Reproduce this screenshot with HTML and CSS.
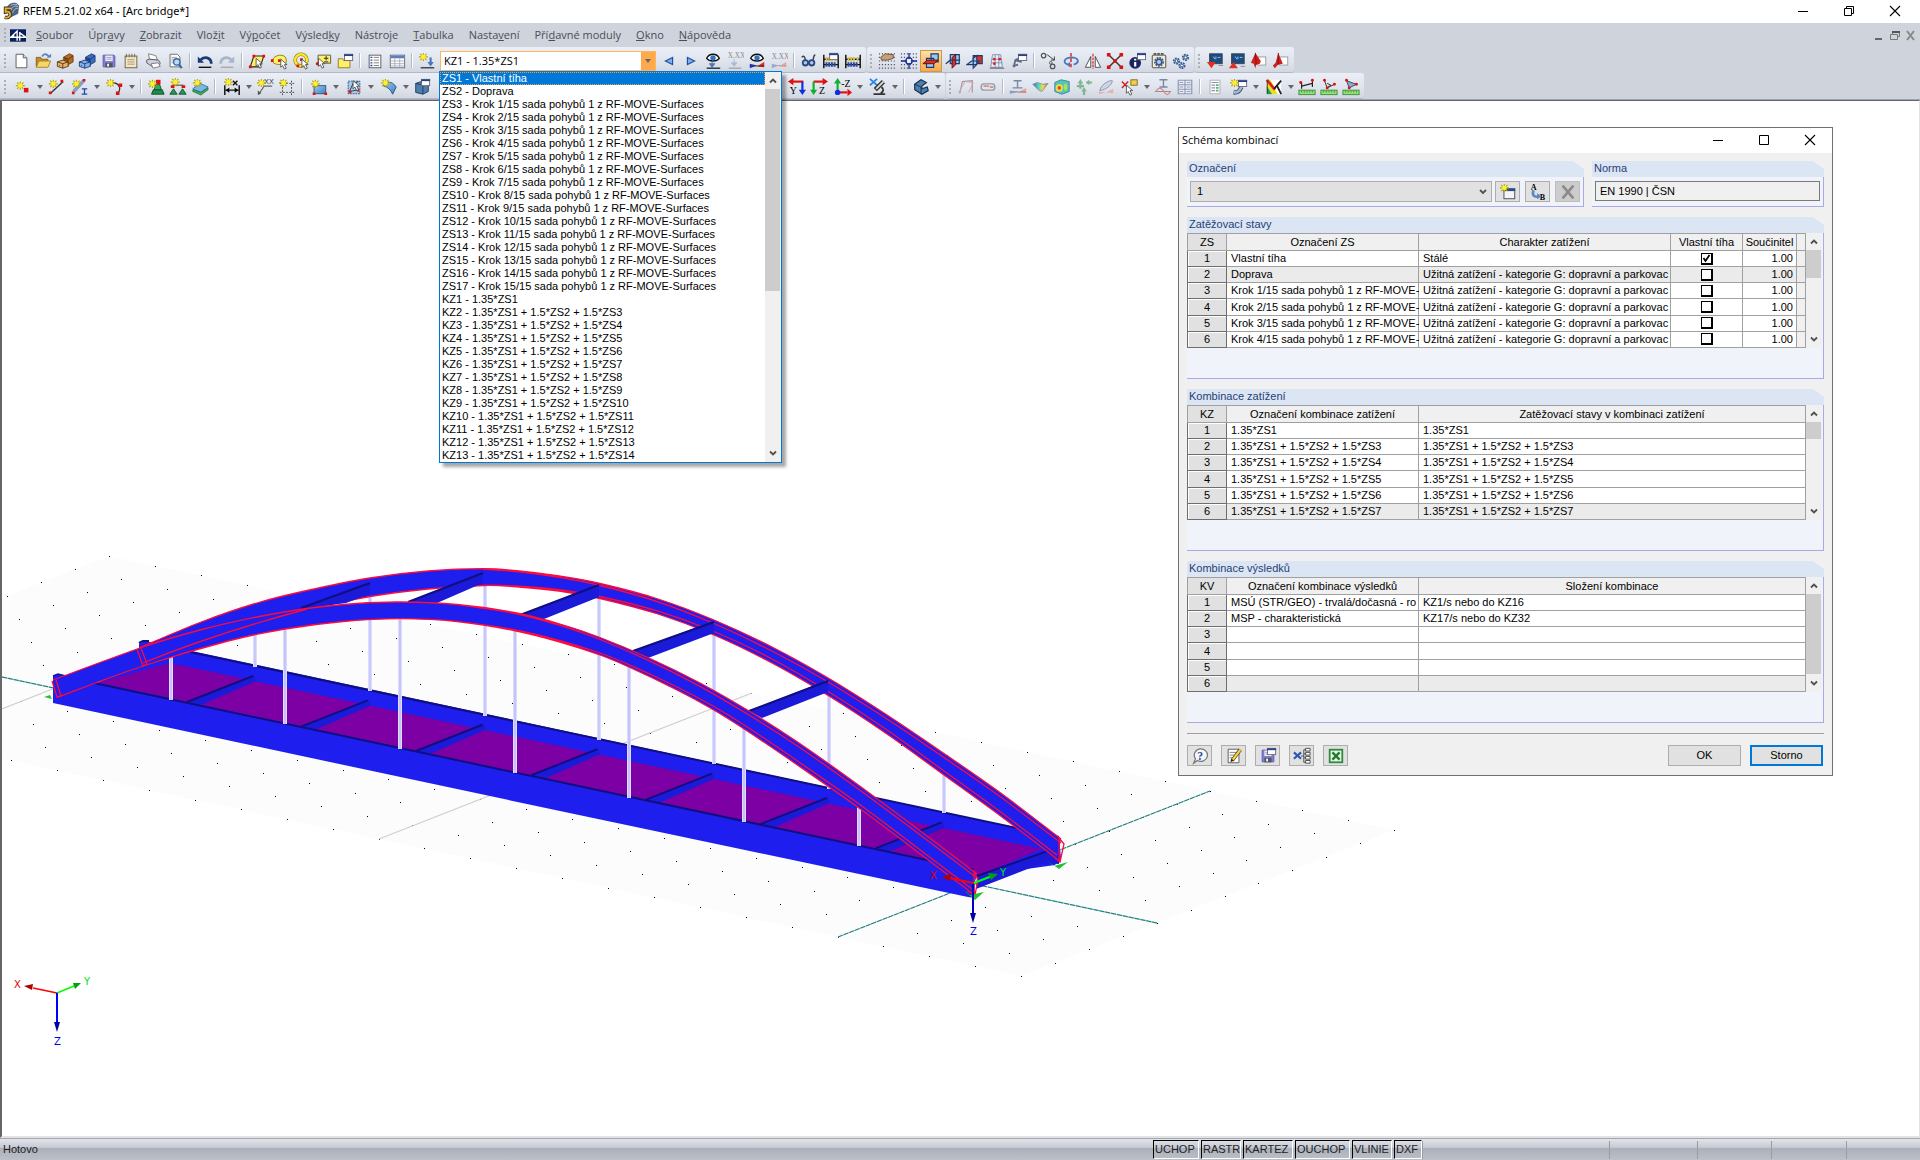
FILE: index.html
```html
<!DOCTYPE html>
<html lang="cs">
<head>
<meta charset="utf-8">
<title>RFEM 5.21.02 x64 - [Arc bridge*]</title>
<link rel="stylesheet" href="styles.css">
</head>
<body>
<svg class="paints" width="0" height="0" aria-hidden="true">
  <defs>
    <linearGradient id="gBlue" x1="0" y1="0" x2="1" y2="1"><stop offset="0" stop-color="#9cc8f0"/><stop offset="1" stop-color="#3f7fc0"/></linearGradient>
    <linearGradient id="gHot" x1="0" y1="0" x2="1" y2="0"><stop offset="0" stop-color="#3a55e0"/><stop offset=".35" stop-color="#4fd0c0"/><stop offset=".65" stop-color="#e8e040"/><stop offset="1" stop-color="#e86050"/></linearGradient>
  </defs>
</svg>
<svg class="sprite" aria-hidden="true">
  <defs>
    <g id="st"><path d="M5 0v9M0 4.500h10M1.500 1l7 7M1.500 8l7-7" stroke="#b9a800" stroke-width="1.300"/><circle cx="5" cy="4.500" r="2.600" fill="#fff02a"/></g>
    <path id="cur" d="M0 0v9l2-2 2 4 2-1-2-4h3z" fill="#fff" stroke="#444" stroke-width=".9"/>
    <g id="win"><rect x=".5" y=".5" width="9" height="7" fill="#fff" stroke="#667"/><path d="M0 1.500h10" stroke="#2a3f8a" stroke-width="2"/></g>
    <g id="grid"><path d="M1 2h18M1 6h18M1 10h18M1 14h18M1 18h18" stroke="#556" stroke-width="1.300" stroke-dasharray="1.300 2" fill="none"/></g>
    <g id="ruler"><rect x="1" y="13.500" width="18" height="5" fill="#8fe07a" stroke="#3f8a3a"/><path d="M4 14v2M7 14v2M10 14v2M13 14v2M16 14v2" stroke="#3f8a3a"/></g>
  </defs>
  <symbol id="i-logo" viewBox="0 0 20 20"><path d="M5 8c1-6 6-8 11-7l3 3-1 9-8 4z" fill="#4b637e"/><path d="M8 7c1-4 5-5 9-4M10 9c1-4 4-5 8-4M12 12c1-4 3-5 6-5" stroke="#b8cbe0" fill="none"/><path d="M10 7H4v4c4-1 5 1 5 3s-2 4-6 3" fill="none" stroke="#333" stroke-width="4"/><path d="M10 7H4v4c4-1 5 1 5 3s-2 4-6 3" fill="none" stroke="#f0b020" stroke-width="2"/></symbol>
  <symbol id="i-mdi" viewBox="0 0 18 14"><rect width="18" height="14" fill="#0b1f5c"/><path d="M0 9h18M1 9l7-7v11M11 3v10M11 4l7 5M4 6v3" stroke="#fff" stroke-width="1.500" fill="none"/></symbol>
  <symbol id="i-new" viewBox="0 0 20 20"><path d="M4.500 2.500h8l4 4v11h-12z" fill="#fff" stroke="#555"/><path d="M12.500 2.500v4h4" fill="#ddd" stroke="#555"/></symbol>
  <symbol id="i-open" viewBox="0 0 20 20"><path d="M2.500 16V6h5l1 2h7v8z" fill="#c98a2a" stroke="#86600f"/><path d="M2.500 17l3-7h13l-3 7z" fill="#f5d76a" stroke="#a88020"/><path d="M9 5c2-4 6-3 8 1" fill="none" stroke="#5b86c0" stroke-width="2"/><path d="M14 6h5V2z" fill="#5b86c0"/></symbol>
  <symbol id="i-cab" viewBox="0 0 20 20"><path d="M8 6l7-4 4 2v7l-5 3" fill="#b86a20" stroke="#4a2c0a" stroke-width=".8"/><path d="M8 6l6 2v8l-6-2z" fill="#8a4f18"/><path d="M1.500 11l6-2 6 2v5l-6 2-6-2z" fill="#e8b068" stroke="#4a2c0a" stroke-width=".9"/><path d="M1.500 11l6 2 6-2M7.500 13v5M4 14.500v1M8 6l6 2 5-4" fill="none" stroke="#4a2c0a" stroke-width=".9"/></symbol>
  <symbol id="i-cabb" viewBox="0 0 20 20"><path d="M8 6l7-4 4 2v7l-5 3" fill="#3b6cc0" stroke="#12306a" stroke-width=".8"/><path d="M8 6l6 2v8l-6-2z" fill="#22488c"/><path d="M1.500 11l6-2 6 2v5l-6 2-6-2z" fill="#86b0ee" stroke="#12306a" stroke-width=".9"/><path d="M1.500 11l6 2 6-2M7.500 13v5M4 14.500v1M8 6l6 2 5-4" fill="none" stroke="#12306a" stroke-width=".9"/></symbol>
  <symbol id="i-save" viewBox="0 0 20 20"><path d="M3.500 3.500h12l1 1v12h-13z" fill="#7f7fd0" stroke="#5a5ab0"/><rect x="6" y="4" width="8" height="6" fill="#f2f2ff"/><path d="M7 6h6M7 8h6" stroke="#99a"/><rect x="6" y="12" width="8" height="5" fill="#556"/><rect x="8" y="13" width="2" height="3" fill="#fff"/></symbol>
  <symbol id="i-note" viewBox="0 0 20 20"><rect x="3.500" y="4.500" width="13" height="13" fill="#f5e6c8" stroke="#6b5a40"/><path d="M5 2v4M8 2v4M11 2v4M14 2v4" stroke="#7b6a50"/><path d="M6 8.500h8M6 11h8M6 13.500h8" stroke="#a59070"/></symbol>
  <symbol id="i-print" viewBox="0 0 20 20"><path d="M5 2l8 2 2 5-9-1z" fill="#fff" stroke="#777"/><path d="M3 9l3-1 10 1 2 3-1 3-8 1-6-4z" fill="#d0d0dc" stroke="#556"/><path d="M8 13l8-1 2 4-8 2z" fill="#fff" stroke="#777"/></symbol>
  <symbol id="i-prev" viewBox="0 0 20 20"><path d="M4.500 2.500h8l3 3v11h-11z" fill="#fff" stroke="#666"/><path d="M6 6h6M6 8h7M6 10h5M6 12h5" stroke="#99a"/><circle cx="12" cy="11" r="3.500" fill="#b8dcf5" stroke="#3868a0" stroke-width="1.400"/><path d="M14.500 14l3 4" stroke="#3868a0" stroke-width="2.400"/></symbol>
  <symbol id="i-undo" viewBox="0 0 20 20"><path d="M5 9c4-5 12-3 12 4" fill="none" stroke="#1d3a78" stroke-width="3"/><path d="M2 5v7h7z" fill="#1d3a78"/><path d="M3 17h14" stroke="#111" stroke-width="1.500"/></symbol>
  <symbol id="i-redo" viewBox="0 0 20 20"><path d="M15 9C11 4 3 6 3 13" fill="none" stroke="#a9b5cc" stroke-width="3"/><path d="M18 5v7h-7z" fill="#a9b5cc"/><path d="M3 17h14" stroke="#aaa" stroke-width="1.500"/></symbol>
  <symbol id="i-para" viewBox="0 0 20 20"><path d="M2.500 16.500l4-12h11l-4 12z" fill="#ffef6a" stroke="#222" stroke-width="1.200"/><path d="M1 15h3v3H1zM5 3h3v3H5zM16 3h3v3h-3z" fill="#e01010"/><use href="#cur" x="9" y="7"/></symbol>
  <symbol id="i-ell" viewBox="0 0 20 20"><path d="M3 9c1-6 14-8 15-1s-4 6-7 6-9-1-8-5z" fill="#fff06a" stroke="#8a7a00"/><path d="M1 8h3v3H1zM9 8h3v3H9z" fill="#e01010"/><use href="#cur" x="12" y="8"/></symbol>
  <symbol id="i-ring" viewBox="0 0 20 20"><circle cx="10" cy="9" r="6.500" fill="none" stroke="#8a7a00" stroke-width="4"/><circle cx="10" cy="9" r="6.500" fill="none" stroke="#ffe630" stroke-width="2.600"/><path d="M9 7h3v3H9zM5 14h3v3H5z" fill="#e01010"/><use href="#cur" x="11" y="8"/></symbol>
  <symbol id="i-selpm" viewBox="0 0 20 20"><path d="M4.500 3.500h14v9h-14z" fill="#fff06a" stroke="#555"/><path d="M11 7h5M13.500 4.500v5M11 11h5" stroke="#222"/><circle cx="4" cy="13" r="2" fill="#e01010"/><use href="#cur" x="5" y="7"/></symbol>
  <symbol id="i-foldw" viewBox="0 0 20 20"><path d="M2.500 7.500h5l1 2h7v8h-13z" fill="#fff06a" stroke="#8a7a20"/><use href="#win" x="9" y="2"/></symbol>
  <symbol id="i-tab1" viewBox="0 0 20 20"><rect x="3.500" y="3.500" width="13" height="14" fill="#fff" stroke="#555"/><path d="M5 6h2M5 9h2M5 12h2M5 15h2" stroke="#2244aa" stroke-width="1.500"/><path d="M8.500 6h6M8.500 9h6M8.500 12h6M8.500 15h6" stroke="#777"/></symbol>
  <symbol id="i-tab2" viewBox="0 0 20 20"><rect x="2.500" y="3.500" width="16" height="14" fill="#fff" stroke="#667"/><path d="M3 5.500h15" stroke="#5b7fc0" stroke-width="3"/><path d="M3 10h15M3 13h15M3 15.500h15M7.500 7v10M13 7v10" stroke="#aab"/></symbol>
  <symbol id="i-load" viewBox="0 0 20 20"><use href="#st" x="1" y="1"/><path d="M14 6v8" stroke="#4a78c0" stroke-width="2.400"/><path d="M10.500 11h7L14 16z" fill="#4a78c0"/><path d="M3 17.500h15" stroke="#444" stroke-width="1.600"/></symbol>
  <symbol id="i-left" viewBox="0 0 20 20"><path d="M6 10l8-4v8z" fill="#7fb0f0" stroke="#2050a0" stroke-width="1.300"/></symbol>
  <symbol id="i-right" viewBox="0 0 20 20"><path d="M14 10L6 6v8z" fill="#7fb0f0" stroke="#2050a0" stroke-width="1.300"/></symbol>
  <symbol id="i-eyel" viewBox="0 0 20 20"><path d="M3 7c3-6 11-6 14 0-3 4-11 4-14 0z" fill="#fff" stroke="#111" stroke-width="1.500"/><circle cx="10" cy="6.500" r="3" fill="#3a70c0"/><path d="M9 10v4M6 13h6l-3 4z" stroke="#4a78c0" fill="#4a78c0"/><path d="M3 18h15" stroke="#333" stroke-width="1.600"/></symbol>
  <symbol id="i-xxl" viewBox="0 0 20 20"><text x="2" y="7" font-size="8" fill="#888" font-family="Liberation Serif">X.XX</text><path d="M9 8v5M6 12h6l-3 4z" stroke="#a9bbd8" fill="#a9bbd8"/><path d="M3 18h14" stroke="#aaa" stroke-width="1.600"/></symbol>
  <symbol id="i-eyer" viewBox="0 0 20 20"><path d="M3 7c3-6 11-6 14 0-3 4-11 4-14 0z" fill="#fff" stroke="#111" stroke-width="1.500"/><circle cx="10" cy="6.500" r="3" fill="#3a70c0"/><path d="M2 13v5l8-3z" fill="#2030d0"/><path d="M18 11v6l-8-1z" fill="#e02020"/><path d="M2 15.500h16" stroke="#333"/></symbol>
  <symbol id="i-xxr" viewBox="0 0 20 20"><text x="2" y="8" font-size="8" fill="#888" font-family="Liberation Serif">X.XX</text><path d="M2 13v5l8-3z" fill="#9aa4e8"/><path d="M18 11v6l-8-1z" fill="#eea0a0"/><path d="M2 15h16" stroke="#aaa"/></symbol>
  <symbol id="i-glass" viewBox="0 0 20 20"><path d="M2 6c2-3 4 0 4 4M17 3c-3 1-1 4-3 7" fill="none" stroke="#345" stroke-width="1.600"/><circle cx="6" cy="12" r="3" fill="#a8c8ec" stroke="#2c4a80" stroke-width="2"/><circle cx="13" cy="12" r="3" fill="#a8c8ec" stroke="#2c4a80" stroke-width="2"/></symbol>
  <symbol id="i-aba" viewBox="0 0 20 20"><path d="M2 3v15M18 3v15M2 8h16M2 14h16" stroke="#111" stroke-width="1.600"/><path d="M5 5.500v5M8 5.500v5M11 5.500v5M15 5.500v5" stroke="#d8c050" stroke-width="2.200"/><path d="M5 11.500v5M8 11.500v5M11 11.500v5M14 11.500v5" stroke="#2a48a0" stroke-width="2.200"/></symbol>
  <symbol id="i-abaw" viewBox="0 0 20 20"><use href="#i-aba" width="20" height="20"/><use href="#win" x="8" y="1"/></symbol>
  <symbol id="i-hand" viewBox="0 0 20 20"><use href="#grid"/><path d="M3 6l5-4 9 1v4l-6 2-7 0z" fill="#c8a07a" stroke="#6b4a2a"/></symbol>
  <symbol id="i-snap" viewBox="0 0 20 20"><use href="#grid"/><circle cx="10" cy="10" r="3.500" fill="#fff" stroke="#1a2f9a" stroke-width="1.500"/><path d="M10 1v7M10 12v7M1 10h7M12 10h7" stroke="#1a2f9a" stroke-width="1.500"/></symbol>
  <symbol id="i-pl1" viewBox="0 0 20 20"><path d="M10 2h8v9h-8zM5 7h8v10H5z" fill="#9fc8ee" stroke="#1d3a70" stroke-width="1.300"/><path d="M1 13l5-4h12l-5 4z" fill="#e03020" stroke="#501010"/></symbol>
  <symbol id="i-pl2" viewBox="0 0 20 20"><path d="M7 3h10v10H7z" fill="#9fc8ee" stroke="#1d3a70" stroke-width="1.300"/><path d="M9 6l4-3v11l-4 4z" fill="#e03020" stroke="#501010"/><path d="M2 13l5-4h11" fill="none" stroke="#1d3a70" stroke-width="1.500"/></symbol>
  <symbol id="i-pl3" viewBox="0 0 20 20"><path d="M8 4h10v9H8z" fill="#e83020" stroke="#1d3a70" stroke-width="1.300"/><path d="M1 14l5-4h9l-4 4zM8 7l4-3v10l-4 4z" fill="#9fc8ee" stroke="#1d3a70" stroke-width="1.300"/></symbol>
  <symbol id="i-bld" viewBox="0 0 20 20"><path d="M5 3h9l2 14H3z" fill="#e8eef8" stroke="#8090b0"/><path d="M4 8h11M4 12h12M8 3v14M12 3v14" stroke="#8090b0"/><circle cx="7" cy="8" r="1.500" fill="#e02020"/><circle cx="13" cy="8" r="1.500" fill="#e02020"/><circle cx="7" cy="13" r="1.500" fill="#e02020"/><path d="M2 18h16" stroke="#555"/></symbol>
  <symbol id="i-wr" viewBox="0 0 20 20"><path d="M4 17l2-8 6-3M5 9l8 2M3 16l6-2" fill="none" stroke="#5a6a88" stroke-width="2"/><use href="#win" x="9" y="2"/></symbol>
  <symbol id="i-move" viewBox="0 0 20 20"><circle cx="4" cy="4" r="2.500" fill="none" stroke="#555" stroke-width="1.400"/><circle cx="14" cy="16" r="2.500" fill="none" stroke="#555" stroke-width="1.400"/><circle cx="12" cy="12" r="1.500" fill="none" stroke="#555"/><path d="M8 3l8 6m0-4v4h-4" fill="none" stroke="#333"/></symbol>
  <symbol id="i-rot" viewBox="0 0 20 20"><path d="M7 14c-6-1-6-7 3-8 9 0 10 6 3 8" fill="none" stroke="#4a78c0" stroke-width="2"/><path d="M9 11v6l-4-3z" fill="#4a78c0"/><path d="M10 1v18" stroke="#e02020" stroke-width="1.600" stroke-dasharray="4 2"/></symbol>
  <symbol id="i-mir" viewBox="0 0 20 20"><path d="M7.500 5v12h-6zM12.500 5v12h6z" fill="#fff" stroke="#444"/><path d="M10 2v17" stroke="#e02020" stroke-width="1.300" stroke-dasharray="3 1"/></symbol>
  <symbol id="i-x" viewBox="0 0 20 20"><path d="M3 3l14 14M17 3L3 17" stroke="#333" stroke-width="1.600"/><path d="M1 1h4v4H1zM15 1h4v4h-4zM1 15h4v4H1zM15 15h4v4h-4zM8 8h4v4H8z" fill="#e01010"/></symbol>
  <symbol id="i-info" viewBox="0 0 20 20"><circle cx="8" cy="12" r="6.500" fill="#1a2460"/><path d="M8 11v5M8 7.500v2" stroke="#fff" stroke-width="2.400" fill="none"/><use href="#win" x="10" y="1"/></symbol>
  <symbol id="i-book" viewBox="0 0 20 20"><rect x="2.500" y="3.500" width="15" height="14" rx="1" fill="#f2ead8" stroke="#4a4030"/><path d="M4 2h12" stroke="#555" stroke-width="2" stroke-dasharray="3 1"/><circle cx="10" cy="11" r="4.500" fill="none" stroke="#345890" stroke-width="2" stroke-dasharray="2 1"/><circle cx="10" cy="11" r="3" fill="#b8cce8" stroke="#345890" stroke-width="1.500"/></symbol>
  <symbol id="i-gear" viewBox="0 0 20 20"><g fill="#c8d8f0" stroke="#345890" stroke-width="2" stroke-dasharray="2 1"><circle cx="5" cy="10" r="3"/><circle cx="15" cy="6" r="3"/><circle cx="11" cy="15" r="3"/></g><g fill="#fff" stroke="#345890"><circle cx="5" cy="10" r="1.500"/><circle cx="15" cy="6" r="1.500"/><circle cx="11" cy="15" r="1.500"/></g></symbol>
  <symbol id="i-mon1" viewBox="0 0 20 20"><rect x="4" y="2" width="14" height="11" fill="#1d4a80" stroke="#345"/><path d="M8 5l2 3M11 5v3M13 6h3" stroke="#9fd0ff"/><path d="M1 11h10l-5 7z" fill="#e03020"/><path d="M14 15h5" stroke="#888"/></symbol>
  <symbol id="i-mon2" viewBox="0 0 20 20"><rect x="4" y="2" width="14" height="11" fill="#1d4a80" stroke="#345"/><path d="M8 5l2 3M11 5v3M13 6h3" stroke="#9fd0ff"/><path d="M1 18h10l-5-7z" fill="#e03020"/><path d="M14 16h5" stroke="#888"/></symbol>
  <symbol id="i-red1" viewBox="0 0 20 20"><rect x="8.500" y="5.500" width="9" height="9" fill="#fff" stroke="#999"/><path d="M6 1l6 9-1 3-4 1-1 4-2-5-3-1z" fill="#cc2020"/><path d="M6 1l1 13" stroke="#801010"/></symbol>
  <symbol id="i-red2" viewBox="0 0 20 20"><rect x="8.500" y="5.500" width="9" height="9" fill="#fff" stroke="#999"/><path d="M7 1l5 12-5 1-4 4-2-3 3-3z" fill="#cc2020"/><path d="M7 1l0 13" stroke="#801010"/></symbol>

  <symbol id="i-node" viewBox="0 0 20 20"><use href="#st" x="2" y="4"/><rect x="11" y="11" width="5" height="5" fill="#e01010"/></symbol>
  <symbol id="i-line" viewBox="0 0 20 20"><path d="M4 17L18 4" stroke="#333" stroke-width="1.500"/><path d="M2 15h3v3H2zM15 2h3v3h-3z" fill="#e01010"/><use href="#st" x="2" y="2"/></symbol>
  <symbol id="i-memb" viewBox="0 0 20 20"><path d="M3 15L14 3" stroke="#7fa0d0" stroke-width="4"/><path d="M1 15h3v3H1zM13 1h3v3h-3z" fill="#e01010"/><path d="M12 12h6M12 18h6M15 12v6" stroke="#2244aa" stroke-width="1.400"/><use href="#st" x="1" y="2"/></symbol>
  <symbol id="i-arc" viewBox="0 0 20 20"><path d="M6 5c8 0 12 6 7 12" fill="none" stroke="#333" stroke-width="1.400"/><path d="M11 15h4v4h-4zM14 6h4v4h-4z" fill="#e01010"/><use href="#st" x="0" y="1"/></symbol>
  <symbol id="i-sup1" viewBox="0 0 20 20"><path d="M5 18l2-5h10l2 5z" fill="#1f8a4a" stroke="#0d5028"/><path d="M8 13l2-6h4l2 6z" fill="#35a860" stroke="#0d5028"/><rect x="10" y="2" width="5" height="5" fill="#e01010"/><use href="#st" x="1" y="2"/></symbol>
  <symbol id="i-sup2" viewBox="0 0 20 20"><path d="M4 8h12" stroke="#555" stroke-width="1.300"/><path d="M1 18l4-6 4 6zM11 18l4-6 4 6z" fill="#2a9a50" stroke="#0d5028"/><path d="M2 8h4v3H2zM14 8h4v3h-4z" fill="#e01010"/><use href="#st" x="2" y="0"/></symbol>
  <symbol id="i-sup3" viewBox="0 0 20 20"><path d="M2 12l8-6 9 4-8 6z" fill="#7ab8e8" stroke="#3a70a0"/><path d="M2 13v2l9 4 8-6v-2l-8 5z" fill="#35b058" stroke="#0d5028" stroke-width=".6"/><use href="#st" x="2" y="1"/></symbol>
  <symbol id="i-dim" viewBox="0 0 20 20"><path d="M2 8v11M18 8v11M3 13.500h14" stroke="#111" stroke-width="1.600"/><path d="M3 13.500l4-3v6zM17 13.500l-4-3v6z"/><path d="M11 3l5 5M16 3l-5 5" stroke="#111" stroke-width="1.500"/><use href="#st" x="1" y="0"/></symbol>
  <symbol id="i-xx" viewBox="0 0 20 20"><path d="M3 18L9 9h9" fill="none" stroke="#666" stroke-width="1.300"/><path d="M2 19v-5l4 3z" fill="#555"/><text x="9" y="7" font-size="8" fill="#333" font-family="Liberation Sans">XX</text><use href="#st" x="1" y="1"/></symbol>
  <symbol id="i-area" viewBox="0 0 20 20"><path d="M5 3v16M15 3v16M2 6h16M2 16h16" stroke="#444" stroke-dasharray="2 1.500"/><use href="#st" x="1" y="1"/></symbol>
  <symbol id="i-surf" viewBox="0 0 20 20"><rect x="4.500" y="8.500" width="13" height="9" fill="url(#gBlue)" stroke="#2a5080"/><path d="M3 16h3v3H3zM16 16h3v3h-3z" fill="#e01010"/><use href="#st" x="1" y="2"/></symbol>
  <symbol id="i-mesh" viewBox="0 0 20 20"><path d="M3.500 3.500h13v14h-13z" fill="#a8c8e8" stroke="#2a5080" stroke-dasharray="2 1"/><path d="M5 15l4-9 6 7zM9 6l6-2" fill="none" stroke="#234"/><path d="M4 14h3v3H4zM13 12h3v3h-3z" fill="#e01010"/><use href="#cur" x="9" y="3"/></symbol>
  <symbol id="i-shell" viewBox="0 0 20 20"><path d="M4 6c6-3 11-1 14 4l-4 8c-2-5-5-8-10-9z" fill="url(#gBlue)" stroke="#2a5080"/><use href="#st" x="1" y="1"/></symbol>
  <symbol id="i-solid" viewBox="0 0 20 20"><path d="M3 6l9-3 5 3v9l-6 3-8-2z" fill="#4d7fae" stroke="#1d3a60"/><path d="M3 6l8 2v10M11 8l6-2" fill="none" stroke="#1d3a60"/><use href="#win" x="9" y="1"/></symbol>
  <symbol id="i-ax" viewBox="0 0 20 20"><path d="M5 4h12" stroke="#e01010" stroke-width="2.400"/><path d="M0 4l6-4v8z" fill="#e01010"/><path d="M16 4v11" stroke="#1030e0" stroke-width="2.400"/><path d="M16 19l-4-6h8z" fill="#1030e0"/><text x="2" y="18" font-size="11" font-family="Liberation Serif">Y</text></symbol>
  <symbol id="i-az" viewBox="0 0 20 20"><path d="M4 4h11" stroke="#e01010" stroke-width="2.400"/><path d="M20 4l-6-4v8z" fill="#e01010"/><path d="M4 4v11" stroke="#10b030" stroke-width="2.400"/><path d="M4 19l-4-6h8z" fill="#10b030"/><text x="10" y="18" font-size="11" font-family="Liberation Serif">Z</text></symbol>
  <symbol id="i-amz" viewBox="0 0 20 20"><path d="M4 5v11" stroke="#10b030" stroke-width="2.400"/><path d="M4 0L0 6h8z" fill="#10b030"/><path d="M4 16h11" stroke="#e01010" stroke-width="2.400"/><path d="M20 16l-5-4v8z" fill="#e01010"/><circle cx="4" cy="16" r="3" fill="#1030e0"/><text x="8" y="10" font-size="11" font-family="Liberation Serif">-Z</text></symbol>
  <symbol id="i-micro" viewBox="0 0 20 20"><path d="M1 1l8 7M9 1L1 8" stroke="#2a88e0" stroke-width="2"/><path d="M16 4L7 13" stroke="#333" stroke-width="5"/><path d="M16 4L8 12" stroke="#ddd" stroke-width="2"/><path d="M5 18h13M14 10c3 3 2 5-1 7" fill="none" stroke="#333" stroke-width="2"/></symbol>
  <symbol id="i-iso" viewBox="0 0 20 20"><path d="M3 7l7-5 6 3-5 4v3l6-2 1 4-7 4-8-5z" fill="#4d7fae" stroke="#16304e" stroke-width="1.300"/><path d="M3 7l7 3v8" fill="none" stroke="#16304e"/></symbol>
  <symbol id="i-def" viewBox="0 0 20 20"><path d="M3 17L6 4l11-1v13" fill="none" stroke="#9a9aa4" stroke-width="1.300"/><path d="M2 16l7-12 9 1-5 11" fill="none" stroke="#e0a0a0"/></symbol>
  <symbol id="i-pill" viewBox="0 0 20 20"><rect x="2.500" y="6.500" width="15" height="7" rx="3" fill="#e4e4ea" stroke="#9a9aa4" stroke-width="1.500"/><path d="M5 9h6M12 10h4" stroke="#c89898" stroke-width="2"/></symbol>
  <symbol id="i-ibm" viewBox="0 0 20 20"><path d="M5 3h9M9.500 3v8M4 11h11" stroke="#7a88a8" stroke-width="1.600" fill="none"/><path d="M1 18v-4l9 1z" fill="#a0a8e8"/><path d="M19 11v6l-9-1z" fill="#eea0a0"/><path d="M1 15.500h18" stroke="#888"/></symbol>
  <symbol id="i-hot" viewBox="0 0 20 20"><path d="M2 7l5-2 6 2 6-1-7 9-4-2z" fill="url(#gHot)" stroke="#8890b0"/></symbol>
  <symbol id="i-cube" viewBox="0 0 20 20"><path d="M2 5l7-3 9 2v11l-8 3-8-3z" fill="#50c8b8" stroke="#4080a0"/><circle cx="7" cy="11" r="4" fill="#f0e040"/><circle cx="7" cy="11" r="2" fill="#e84030"/><ellipse cx="14" cy="10" rx="2" ry="4" fill="#b0e050"/></symbol>
  <symbol id="i-grn" viewBox="0 0 20 20"><path d="M6 12V5M2 9h8M13 5h6M10 19v-6" stroke="#7fb890" stroke-width="2.400"/><path d="M6 1l3 5H3zM10 10l3 5H7zM12 5l4-3v6z" fill="#7fb890"/></symbol>
  <symbol id="i-wing" viewBox="0 0 20 20"><path d="M3 14c2-8 12-12 14-11 0 4-6 10-14 11z" fill="#cdd5e4" stroke="#8a94ac"/><path d="M2 18v-3l8 1zM18 12v5l-8-1z" fill="#e8b0b0"/></symbol>
  <symbol id="i-clr" viewBox="0 0 20 20"><path d="M1 4l7 7M8 4l-7 7" stroke="#d02020" stroke-width="1.600"/><rect x="11" y="2" width="7" height="6" fill="#f0d050" stroke="#806a10"/><use href="#cur" x="6" y="8"/></symbol>
  <symbol id="i-sin" viewBox="0 0 20 20"><path d="M6 2h9M10.500 2v8M6 10h9" stroke="#7a88a8" stroke-width="1.600" fill="none"/><path d="M1 15h18" stroke="#888"/><path d="M2 15c3-5 6-5 9 0s5 4 7 0" fill="none" stroke="#e08080" stroke-width="1.300"/></symbol>
  <symbol id="i-tabs" viewBox="0 0 20 20"><path d="M2.500 2.500h15v15h-15zM10 3v14M3 7.500h14M3 12.500h14" fill="#e8ebf4" stroke="#9098b4" stroke-width="1.300"/><path d="M4 5h4M12 5h4M4 10h4M12 10h4M4 15h4M12 15h4" stroke="#9098b4"/></symbol>
  <symbol id="i-rep" viewBox="0 0 20 20"><path d="M4.500 2.500h11v15h-11z" fill="#fff" stroke="#aaa"/><path d="M6 5h8M6 8h4M6 11h4M6 14h4" stroke="#8a94b8" stroke-width="1.300"/><path d="M11 8h3M11 11h3M11 14h3" stroke="#60b080" stroke-width="2"/></symbol>
  <symbol id="i-pipe" viewBox="0 0 20 20"><path d="M4 16c8 1 7-6 10-7" fill="none" stroke="#456" stroke-width="5"/><path d="M4 16c8 1 7-6 10-7" fill="none" stroke="#a0b8d4" stroke-width="3"/><use href="#win" x="9" y="2"/><use href="#st" x="0" y="1"/></symbol>
  <symbol id="i-col" viewBox="0 0 20 20"><path d="M2 2h16v16H2z" fill="#fff"/><path d="M2 2h4l8 16H8L2 9z" fill="#e8e020"/><path d="M2 9l6 9H2z" fill="#20a040"/><path d="M2 2l9 11" stroke="#e02020" stroke-width="3"/><path d="M18 3l-8 9M13 8l5 10" stroke="#222" stroke-width="2"/><path d="M2.500 2.500v15" stroke="#333"/></symbol>
  <symbol id="i-m1" viewBox="0 0 20 20"><use href="#ruler"/><path d="M4 9l12-3M4 5v7M16 3v7" stroke="#222" stroke-width="1.300"/><circle cx="3" cy="5" r="1.600" fill="#e01010"/><circle cx="16" cy="2.500" r="1.600" fill="#e01010"/></symbol>
  <symbol id="i-m2" viewBox="0 0 20 20"><use href="#ruler"/><path d="M5 3l3 8 8-4M8 6l4 2-3 2" fill="none" stroke="#222"/><circle cx="5" cy="2.500" r="1.600" fill="#e01010"/><circle cx="16" cy="7" r="1.600" fill="#e01010"/><circle cx="8" cy="11" r="1.600" fill="#e01010"/></symbol>
  <symbol id="i-m3" viewBox="0 0 20 20"><use href="#ruler"/><path d="M5 3l3 8 8-4z" fill="#8aa8d8" stroke="#345"/><circle cx="5" cy="2.500" r="1.600" fill="#e01010"/><circle cx="16" cy="7" r="1.600" fill="#e01010"/><circle cx="8" cy="11" r="1.600" fill="#e01010"/></symbol>

  <symbol id="i-dnew" viewBox="0 0 20 20"><rect x="5.500" y="6.500" width="12" height="11" fill="#f4f4f4" stroke="#445"/><path d="M5 7.500h13" stroke="#2a4a90" stroke-width="3"/><use href="#st" x="1" y="1"/></symbol>
  <symbol id="i-dren" viewBox="0 0 20 20"><text x="2" y="8" font-size="9" font-weight="700" font-family="Liberation Serif">A</text><text x="12" y="19" font-size="9" font-weight="700" font-family="Liberation Serif">B</text><path d="M5 8c-2 6 1 8 5 7" fill="none" stroke="#5a88c8" stroke-width="3"/><path d="M9 11l5 4-5 3z" fill="#5a88c8"/></symbol>
  <symbol id="i-ddel" viewBox="0 0 20 20"><path d="M4 3l12 14M16 3L4 17" stroke="#8c8c8c" stroke-width="3"/></symbol>
  <symbol id="i-help" viewBox="0 0 20 20"><path d="M10 2a7.500 7 0 1 1-3 13l-4 3 2-5a7 7 0 0 1 5-11z" fill="#f4f6fa" stroke="#777" stroke-width="1.400"/><text x="7" y="14" font-size="13" font-weight="700" fill="#2a4a90" font-family="Liberation Serif">?</text></symbol>
  <symbol id="i-edit" viewBox="0 0 20 20"><path d="M3.500 2.500h12v15h-12z" fill="#fff" stroke="#555"/><path d="M5 6h8M5 9h6M5 12h4" stroke="#778"/><path d="M17 3l-9 12" stroke="#333" stroke-width="4"/><path d="M17 3l-9 12" stroke="#f8d030" stroke-width="2.600"/><path d="M6 17l1-4 3 2z" fill="#222"/></symbol>
  <symbol id="i-savew" viewBox="0 0 20 20"><use href="#i-save" width="20" height="20"/><use href="#win" x="9" y="1"/></symbol>
  <symbol id="i-tree" viewBox="0 0 20 20"><path d="M1 6l8 7M9 6l-8 7" stroke="#2a58b0" stroke-width="2.400"/><path d="M9 10h3M12 3v14h2M12 3h2M12 7.500h2M12 12h2" fill="none" stroke="#444"/><path d="M14 1.500h5v3h-5zM14 6h5v3h-5zM14 10.500h5v3h-5zM14 15h5v3h-5z" fill="#fff" stroke="#444"/></symbol>
  <symbol id="i-xls" viewBox="0 0 20 20"><path d="M2 2h16v16H2z" fill="#2f8a3f"/><path d="M4 4h12v12H4z" fill="#e8f5e8"/><path d="M6 6l8 8M14 6l-8 8" stroke="#1f7a30" stroke-width="2.600"/></symbol>
  <symbol id="i-up" viewBox="0 0 16 16"><path d="M5 10l3-3 3 3" fill="none" stroke="#505050" stroke-width="1.800"/></symbol>
  <symbol id="i-down" viewBox="0 0 16 16"><path d="M5 6l3 3 3-3" fill="none" stroke="#505050" stroke-width="1.800"/></symbol>
  <symbol id="i-min" viewBox="0 0 12 12"><path d="M1 6.500h10" stroke="#000"/></symbol>
  <symbol id="i-max" viewBox="0 0 12 12"><path d="M1.500 1.500h9v9h-9z" fill="none" stroke="#000"/></symbol>
  <symbol id="i-rest" viewBox="0 0 12 12"><path d="M1.500 3.500h7v7h-7zM3.500 3.500v-2h7v7h-2" fill="none" stroke="#000"/></symbol>
  <symbol id="i-close" viewBox="0 0 12 12"><path d="M1 1l10 10M11 1L1 11" stroke="#000" stroke-width="1.100"/></symbol>
  <symbol id="i-arrow" viewBox="0 0 8 8"><path d="M1 2h6L4 6z" fill="#666"/></symbol>
</svg>

<div class="app">
  <header class="titlebar">
    <svg class="app-logo"><use href="#i-logo"/></svg>
    <h1 class="app-title">RFEM 5.21.02 x64 - [Arc bridge*]</h1>
    <div class="win-buttons">
      <button><svg><use href="#i-min"/></svg></button>
      <button><svg><use href="#i-rest"/></svg></button>
      <button><svg><use href="#i-close"/></svg></button>
    </div>
  </header>

  <nav class="menubar">
    <span class="grip"></span>
    <svg class="mdi-icon"><use href="#i-mdi"/></svg>
    <ul class="menu">
      <li><a href="#"><u>S</u>oubor</a></li>
      <li><a href="#">Úpr<u>a</u>vy</a></li>
      <li><a href="#"><u>Z</u>obrazit</a></li>
      <li><a href="#">Vlož<u>i</u>t</a></li>
      <li><a href="#">Vý<u>p</u>očet</a></li>
      <li><a href="#">Výsled<u>k</u>y</a></li>
      <li><a href="#">Nástroje</a></li>
      <li><a href="#"><u>T</u>abulka</a></li>
      <li><a href="#">Nasta<u>v</u>ení</a></li>
      <li><a href="#">Pří<u>d</u>avné moduly</a></li>
      <li><a href="#"><u>O</u>kno</a></li>
      <li><a href="#"><u>N</u>ápověda</a></li>
    </ul>
    <svg class="mdi-buttons" viewBox="0 0 44 14"><path d="M1 11h7" stroke="#666" stroke-width="2"/><path d="M16.500 6.500h7v5h-7zM18.500 6V3.500h7v5H24" fill="none" stroke="#777"/><path d="M18 4h8" stroke="#555" stroke-width="2"/><path d="M33 3l7 9M40 3l-7 9" stroke="#888" stroke-width="2"/></svg>
  </nav>

  <div class="toolbars">
    <div class="toolrow">
      <div class="strip">
        <span class="grip"></span>
        <button class="tb"><svg><use href="#i-new"/></svg></button>
        <button class="tb"><svg><use href="#i-open"/></svg></button>
        <button class="tb"><svg><use href="#i-cab"/></svg></button>
        <button class="tb"><svg><use href="#i-cabb"/></svg></button>
        <button class="tb"><svg><use href="#i-save"/></svg></button>
        <button class="tb"><svg><use href="#i-note"/></svg></button>
        <button class="tb"><svg><use href="#i-print"/></svg></button>
        <button class="tb"><svg><use href="#i-prev"/></svg></button>
        <span class="sep"></span>
        <button class="tb"><svg><use href="#i-undo"/></svg></button>
        <button class="tb"><svg><use href="#i-redo"/></svg></button>
        <span class="sep"></span>
        <button class="tb"><svg><use href="#i-para"/></svg></button>
        <button class="tb"><svg><use href="#i-ell"/></svg></button>
        <button class="tb"><svg><use href="#i-ring"/></svg></button>
        <button class="tb"><svg><use href="#i-selpm"/></svg></button>
        <button class="tb"><svg><use href="#i-foldw"/></svg></button>
        <span class="sep"></span>
        <button class="tb"><svg><use href="#i-tab1"/></svg></button>
        <button class="tb"><svg><use href="#i-tab2"/></svg></button>
        <span class="sep"></span>
        <button class="tb"><svg><use href="#i-load"/></svg></button>
        <div class="combo">
          <select class="combo-select" aria-label="Zatěžovací stav"><option>KZ1 - 1.35*ZS1</option></select>
          <span class="combo-arrow"><svg><use href="#i-arrow"/></svg></span>
          <div class="droplist">
            <ul role="listbox" aria-label="Zatěžovací stavy">
              <li role="option" aria-selected="true" class="is-selected">ZS1 - Vlastní tíha</li>
              <li role="option">ZS2 - Doprava</li>
              <li role="option">ZS3 - Krok 1/15 sada pohybů 1 z RF-MOVE-Surfaces</li>
              <li role="option">ZS4 - Krok 2/15 sada pohybů 1 z RF-MOVE-Surfaces</li>
              <li role="option">ZS5 - Krok 3/15 sada pohybů 1 z RF-MOVE-Surfaces</li>
              <li role="option">ZS6 - Krok 4/15 sada pohybů 1 z RF-MOVE-Surfaces</li>
              <li role="option">ZS7 - Krok 5/15 sada pohybů 1 z RF-MOVE-Surfaces</li>
              <li role="option">ZS8 - Krok 6/15 sada pohybů 1 z RF-MOVE-Surfaces</li>
              <li role="option">ZS9 - Krok 7/15 sada pohybů 1 z RF-MOVE-Surfaces</li>
              <li role="option">ZS10 - Krok 8/15 sada pohybů 1 z RF-MOVE-Surfaces</li>
              <li role="option">ZS11 - Krok 9/15 sada pohybů 1 z RF-MOVE-Surfaces</li>
              <li role="option">ZS12 - Krok 10/15 sada pohybů 1 z RF-MOVE-Surfaces</li>
              <li role="option">ZS13 - Krok 11/15 sada pohybů 1 z RF-MOVE-Surfaces</li>
              <li role="option">ZS14 - Krok 12/15 sada pohybů 1 z RF-MOVE-Surfaces</li>
              <li role="option">ZS15 - Krok 13/15 sada pohybů 1 z RF-MOVE-Surfaces</li>
              <li role="option">ZS16 - Krok 14/15 sada pohybů 1 z RF-MOVE-Surfaces</li>
              <li role="option">ZS17 - Krok 15/15 sada pohybů 1 z RF-MOVE-Surfaces</li>
              <li role="option">KZ1 - 1.35*ZS1</li>
              <li role="option">KZ2 - 1.35*ZS1 + 1.5*ZS2 + 1.5*ZS3</li>
              <li role="option">KZ3 - 1.35*ZS1 + 1.5*ZS2 + 1.5*ZS4</li>
              <li role="option">KZ4 - 1.35*ZS1 + 1.5*ZS2 + 1.5*ZS5</li>
              <li role="option">KZ5 - 1.35*ZS1 + 1.5*ZS2 + 1.5*ZS6</li>
              <li role="option">KZ6 - 1.35*ZS1 + 1.5*ZS2 + 1.5*ZS7</li>
              <li role="option">KZ7 - 1.35*ZS1 + 1.5*ZS2 + 1.5*ZS8</li>
              <li role="option">KZ8 - 1.35*ZS1 + 1.5*ZS2 + 1.5*ZS9</li>
              <li role="option">KZ9 - 1.35*ZS1 + 1.5*ZS2 + 1.5*ZS10</li>
              <li role="option">KZ10 - 1.35*ZS1 + 1.5*ZS2 + 1.5*ZS11</li>
              <li role="option">KZ11 - 1.35*ZS1 + 1.5*ZS2 + 1.5*ZS12</li>
              <li role="option">KZ12 - 1.35*ZS1 + 1.5*ZS2 + 1.5*ZS13</li>
              <li role="option">KZ13 - 1.35*ZS1 + 1.5*ZS2 + 1.5*ZS14</li>
            </ul>
            <div class="scroll"><svg><use href="#i-up"/></svg><span class="thumb" style="height:202px"></span><svg class="scroll-end"><use href="#i-down"/></svg></div>
          </div>
        </div>
        <button class="tb"><svg><use href="#i-left"/></svg></button>
        <button class="tb"><svg><use href="#i-right"/></svg></button>
        <button class="tb"><svg><use href="#i-eyel"/></svg></button>
        <button class="tb"><svg><use href="#i-xxl"/></svg></button>
        <button class="tb"><svg><use href="#i-eyer"/></svg></button>
        <button class="tb"><svg><use href="#i-xxr"/></svg></button>
        <span class="sep"></span>
        <button class="tb"><svg><use href="#i-glass"/></svg></button>
        <button class="tb"><svg><use href="#i-abaw"/></svg></button>
        <button class="tb"><svg><use href="#i-aba"/></svg></button>
      </div>
      <div class="strip">
        <span class="grip"></span>
        <button class="tb"><svg><use href="#i-hand"/></svg></button>
        <button class="tb"><svg><use href="#i-snap"/></svg></button>
        <button class="tb is-active"><svg><use href="#i-pl1"/></svg></button>
        <button class="tb"><svg><use href="#i-pl2"/></svg></button>
        <button class="tb"><svg><use href="#i-pl3"/></svg></button>
        <button class="tb"><svg><use href="#i-bld"/></svg></button>
        <button class="tb"><svg><use href="#i-wr"/></svg></button>
        <span class="sep"></span>
        <button class="tb"><svg><use href="#i-move"/></svg></button>
        <button class="tb"><svg><use href="#i-rot"/></svg></button>
        <button class="tb"><svg><use href="#i-mir"/></svg></button>
        <button class="tb"><svg><use href="#i-x"/></svg></button>
        <button class="tb"><svg><use href="#i-info"/></svg></button>
        <button class="tb"><svg><use href="#i-book"/></svg></button>
        <button class="tb"><svg><use href="#i-gear"/></svg></button>
      </div>
      <div class="strip">
        <span class="grip"></span>
        <button class="tb"><svg><use href="#i-mon1"/></svg></button>
        <button class="tb"><svg><use href="#i-mon2"/></svg></button>
        <button class="tb"><svg><use href="#i-red1"/></svg></button>
        <button class="tb"><svg><use href="#i-red2"/></svg></button>
      </div>
    </div>
    <div class="toolrow">
      <div class="strip">
        <span class="grip"></span>
        <button class="tb split"><svg><use href="#i-node"/></svg><svg class="dd"><use href="#i-arrow"/></svg></button>
        <button class="tb"><svg><use href="#i-line"/></svg></button>
        <button class="tb split"><svg><use href="#i-memb"/></svg><svg class="dd"><use href="#i-arrow"/></svg></button>
        <button class="tb split"><svg><use href="#i-arc"/></svg><svg class="dd"><use href="#i-arrow"/></svg></button>
        <span class="sep"></span>
        <button class="tb"><svg><use href="#i-sup1"/></svg></button>
        <button class="tb"><svg><use href="#i-sup2"/></svg></button>
        <button class="tb"><svg><use href="#i-sup3"/></svg></button>
        <span class="sep"></span>
        <button class="tb split"><svg><use href="#i-dim"/></svg><svg class="dd"><use href="#i-arrow"/></svg></button>
        <button class="tb"><svg><use href="#i-xx"/></svg></button>
        <button class="tb"><svg><use href="#i-area"/></svg></button>
        <span class="sep"></span>
        <button class="tb split"><svg><use href="#i-surf"/></svg><svg class="dd"><use href="#i-arrow"/></svg></button>
        <button class="tb split"><svg><use href="#i-mesh"/></svg><svg class="dd"><use href="#i-arrow"/></svg></button>
        <button class="tb split"><svg><use href="#i-shell"/></svg><svg class="dd"><use href="#i-arrow"/></svg></button>
        <button class="tb"><svg><use href="#i-solid"/></svg></button>
        <span class="covered"></span>
        <button class="tb"><svg><use href="#i-ax"/></svg></button>
        <button class="tb"><svg><use href="#i-az"/></svg></button>
        <button class="tb split"><svg><use href="#i-amz"/></svg><svg class="dd"><use href="#i-arrow"/></svg></button>
        <button class="tb split"><svg><use href="#i-micro"/></svg><svg class="dd"><use href="#i-arrow"/></svg></button>
        <span class="sep"></span>
        <button class="tb split"><svg><use href="#i-iso"/></svg><svg class="dd"><use href="#i-arrow"/></svg></button>
      </div>
      <div class="strip">
        <span class="grip"></span>
        <button class="tb"><svg><use href="#i-def"/></svg></button>
        <button class="tb"><svg><use href="#i-pill"/></svg></button>
        <span class="sep"></span>
        <button class="tb"><svg><use href="#i-ibm"/></svg></button>
        <button class="tb"><svg><use href="#i-hot"/></svg></button>
        <button class="tb"><svg><use href="#i-cube"/></svg></button>
        <button class="tb"><svg><use href="#i-grn"/></svg></button>
        <button class="tb"><svg><use href="#i-wing"/></svg></button>
        <button class="tb split"><svg><use href="#i-clr"/></svg><svg class="dd"><use href="#i-arrow"/></svg></button>
        <button class="tb"><svg><use href="#i-sin"/></svg></button>
        <button class="tb"><svg><use href="#i-tabs"/></svg></button>
        <span class="sep"></span>
        <button class="tb"><svg><use href="#i-rep"/></svg></button>
        <button class="tb split"><svg><use href="#i-pipe"/></svg><svg class="dd"><use href="#i-arrow"/></svg></button>
        <button class="tb split"><svg><use href="#i-col"/></svg><svg class="dd"><use href="#i-arrow"/></svg></button>
        <button class="tb"><svg><use href="#i-m1"/></svg></button>
        <button class="tb"><svg><use href="#i-m2"/></svg></button>
        <button class="tb"><svg><use href="#i-m3"/></svg></button>
      </div>
    </div>
  </div>

  <main class="workspace">
    <svg class="scene" viewBox="2 101 1418 980" width="1418" height="980">
      <polygon points="109,556 1394,830 1021,976 -264,702" fill="#fcfcfc"/>
      <g id="grid-dots" fill="#000" shape-rendering="crispEdges"></g>
      <path d="M379 839L752 693M2 709L55 688" stroke="#cfcfcf" stroke-width="1.200"/>
      <path d="M2 677L1157 923M838 937L1210 791" stroke="#a4d2d2" stroke-width="1.300"/>
      <path d="M2 677L1157 923M838 937L1210 791" stroke="#0a6e6e" stroke-width=".9" stroke-dasharray="5 1"/>

      <!-- rear girder and deck -->
      <polygon points="139,644 145,641 1059,837 1061,858 1055,865 977,876 96,684 139,660" fill="#1e1eee"/>
      <polygon points="96,683 170,663 1042,849 977,876" fill="#7d00a5"/>
      <g id="cross-beams"></g>
      <polygon points="977,876 1059,847 1059,864 1043,863 976,889" fill="#1a1ad8"/>
      <path d="M977 876L1059 847" stroke="#0f0f80" stroke-width="2"/>
      <path d="M190 652L1059 837" stroke="#0f0f80" stroke-width="2"/>
      <path d="M139 643l4-2h6" stroke="#0f0f80" stroke-width="2" fill="none"/>
      <g id="rear-hangers"></g>

      <!-- rear arch -->
      <path id="rear-arch" fill="#1e1eee"/>
      <path id="rear-lines" class="edge"/>
      <g fill="#1a1ad8">
        <polygon points="301,609 370,583 370,594 346,603"/>
        <polygon points="408,602 483,572 483,583 437,603"/>
        <polygon points="520,615 599,584 599,597 539,621"/>
        <polygon points="633,651 714,621 714,633 648,658"/>
        <polygon points="749,711 828,680 828,692 762,718"/>
      </g>
      <path d="M301 608L370 583M408 602L483 573M520 615L599 585M633 651L714 622M749 711L828 681" stroke="#0f0f80" stroke-width="2"/>

      <!-- front girder -->
      <polygon points="53,676 57,674 974,870 975,898 968,897 560,811 53,703" fill="#1e1eee"/>
      <path d="M53 676l5-2L94 683" stroke="#15159c" stroke-width="1.500" fill="none"/>
      <path d="M94 683L974 870" stroke="#0f0f80" stroke-width="2"/>
      <g id="front-hangers"></g>

      <!-- front arch -->
      <path id="front-arch" fill="#1e1eee"/>
      <path id="front-lines" class="edge"/>
      <path d="M143 663Q214 634 307 609" class="edge"/>
      <path d="M52 681l5 16 4-1-5-16M137 649l6 17 4-2-6-16M974 872l4 7-3 16-8-4M1059 838l5 6-4 18-5-4M974 870v26M1059 837v24" class="edge"/>
      <path d="M962 889l8 6 14-3-9 8zM1046 860l8 6 14-4-9 7zM50 695l-6 2 8 2z" fill="#22c032"/>

      <!-- local axes -->
      <path d="M973 883L950 878" stroke="#f00" stroke-width="2"/><path d="M942 877l9-3-1 7z" fill="#b00000"/>
      <path d="M974 883L992 876" stroke="#0f0" stroke-width="2"/><path d="M998 874l-10-1 3 7z" fill="#00a010"/>
      <path d="M973 884V913" stroke="#0000c0" stroke-width="2"/><path d="M973 923l-3-10h6z" fill="#0000a0"/>
      <g class="axis-label"><text x="930" y="879" fill="#e00000">X</text><text x="1000" y="876" fill="#00e020">Y</text><text x="970" y="935" fill="#0000f0">Z</text></g>

      <!-- global axes -->
      <path d="M57 993L33 988" stroke="#f00" stroke-width="1.500"/><path d="M24 986l9-2-1 6z" fill="#b00000"/>
      <path d="M57 993L74 986" stroke="#0f0" stroke-width="1.500"/><path d="M81 983l-8 0 2 6z" fill="#00a010"/>
      <path d="M57 993V1024" stroke="#00f" stroke-width="2"/><path d="M57 1032l-3-10h6z" fill="#0000a0"/>
      <g class="axis-label"><text x="14" y="988" fill="#e00000">X</text><text x="84" y="985" fill="#00e020">Y</text><text x="54" y="1045" fill="#0000f0">Z</text></g>
    </svg>

    <section class="dialog" role="dialog" aria-labelledby="dlg-title">
      <header class="dialog-title">
        <h2 id="dlg-title">Schéma kombinací</h2>
        <div class="win-buttons">
          <button><svg><use href="#i-min"/></svg></button>
          <button><svg><use href="#i-max"/></svg></button>
          <button><svg><use href="#i-close"/></svg></button>
        </div>
      </header>
      <div class="dialog-body">
        <div class="group-row">
          <div class="group group-wide">
            <h3><label for="scheme">Označení</label></h3>
            <div class="group-fields">
              <div class="select-wrap">
                <select id="scheme"><option>1</option></select>
                <svg><use href="#i-down"/></svg>
              </div>
              <button class="ibtn"><svg><use href="#i-dnew"/></svg></button>
              <button class="ibtn"><svg><use href="#i-dren"/></svg></button>
              <button class="ibtn" disabled><svg><use href="#i-ddel"/></svg></button>
            </div>
          </div>
          <div class="group group-narrow">
            <h3><label for="norm">Norma</label></h3>
            <div class="group-fields"><input id="norm" type="text" value="EN 1990 | ČSN" readonly></div>
          </div>
        </div>

        <div class="group">
          <h3>Zatěžovací stavy</h3>
          <div class="table-wrap">
            <table>
              <colgroup><col class="c-num"><col class="c-name"><col class="c-char"><col class="c-self"><col class="c-fac"><col></colgroup>
              <thead><tr><th>ZS</th><th>Označení ZS</th><th>Charakter zatížení</th><th>Vlastní tíha</th><th>Součinitel</th><th></th></tr></thead>
              <tbody>
                <tr><th>1</th><td>Vlastní tíha</td><td>Stálé</td><td class="chk"><input type="checkbox" checked aria-label="ZS 1"></td><td class="num">1.00</td><td class="fill"></td></tr>
                <tr class="alt"><th>2</th><td>Doprava</td><td>Užitná zatížení - kategorie G: dopravní a parkovac</td><td class="chk"><input type="checkbox" aria-label="ZS 2"></td><td class="num">1.00</td><td class="fill"></td></tr>
                <tr><th>3</th><td>Krok 1/15 sada pohybů 1 z RF-MOVE-</td><td>Užitná zatížení - kategorie G: dopravní a parkovac</td><td class="chk"><input type="checkbox" aria-label="ZS 3"></td><td class="num">1.00</td><td class="fill"></td></tr>
                <tr><th>4</th><td>Krok 2/15 sada pohybů 1 z RF-MOVE-</td><td>Užitná zatížení - kategorie G: dopravní a parkovac</td><td class="chk"><input type="checkbox" aria-label="ZS 4"></td><td class="num">1.00</td><td class="fill"></td></tr>
                <tr><th>5</th><td>Krok 3/15 sada pohybů 1 z RF-MOVE-</td><td>Užitná zatížení - kategorie G: dopravní a parkovac</td><td class="chk"><input type="checkbox" aria-label="ZS 5"></td><td class="num">1.00</td><td class="fill"></td></tr>
                <tr><th>6</th><td>Krok 4/15 sada pohybů 1 z RF-MOVE-</td><td>Užitná zatížení - kategorie G: dopravní a parkovac</td><td class="chk"><input type="checkbox" aria-label="ZS 6"></td><td class="num">1.00</td><td class="fill"></td></tr>
              </tbody>
            </table>
            <div class="scroll"><svg><use href="#i-up"/></svg><span class="thumb" style="height:28px"></span><svg class="scroll-end"><use href="#i-down"/></svg></div>
          </div>
        </div>

        <div class="group">
          <h3>Kombinace zatížení</h3>
          <div class="table-wrap">
            <table>
              <colgroup><col class="c-num"><col class="c-name"><col></colgroup>
              <thead><tr><th>KZ</th><th>Označení kombinace zatížení</th><th>Zatěžovací stavy v kombinaci zatížení</th></tr></thead>
              <tbody>
                <tr><th>1</th><td>1.35*ZS1</td><td>1.35*ZS1</td></tr>
                <tr><th>2</th><td>1.35*ZS1 + 1.5*ZS2 + 1.5*ZS3</td><td>1.35*ZS1 + 1.5*ZS2 + 1.5*ZS3</td></tr>
                <tr><th>3</th><td>1.35*ZS1 + 1.5*ZS2 + 1.5*ZS4</td><td>1.35*ZS1 + 1.5*ZS2 + 1.5*ZS4</td></tr>
                <tr><th>4</th><td>1.35*ZS1 + 1.5*ZS2 + 1.5*ZS5</td><td>1.35*ZS1 + 1.5*ZS2 + 1.5*ZS5</td></tr>
                <tr><th>5</th><td>1.35*ZS1 + 1.5*ZS2 + 1.5*ZS6</td><td>1.35*ZS1 + 1.5*ZS2 + 1.5*ZS6</td></tr>
                <tr class="alt"><th>6</th><td>1.35*ZS1 + 1.5*ZS2 + 1.5*ZS7</td><td>1.35*ZS1 + 1.5*ZS2 + 1.5*ZS7</td></tr>
              </tbody>
            </table>
            <div class="scroll"><svg><use href="#i-up"/></svg><span class="thumb" style="height:17px"></span><svg class="scroll-end"><use href="#i-down"/></svg></div>
          </div>
        </div>

        <div class="group">
          <h3>Kombinace výsledků</h3>
          <div class="table-wrap">
            <table>
              <colgroup><col class="c-num"><col class="c-name"><col></colgroup>
              <thead><tr><th>KV</th><th>Označení kombinace výsledků</th><th>Složení kombinace</th></tr></thead>
              <tbody>
                <tr><th>1</th><td>MSÚ (STR/GEO) - trvalá/dočasná - ro</td><td>KZ1/s nebo do KZ16</td></tr>
                <tr><th>2</th><td>MSP - charakteristická</td><td>KZ17/s nebo do KZ32</td></tr>
                <tr><th>3</th><td></td><td></td></tr>
                <tr><th>4</th><td></td><td></td></tr>
                <tr><th>5</th><td></td><td></td></tr>
                <tr class="alt"><th>6</th><td></td><td></td></tr>
              </tbody>
            </table>
            <div class="scroll"><svg><use href="#i-up"/></svg><span class="thumb" style="height:80px"></span><svg class="scroll-end"><use href="#i-down"/></svg></div>
          </div>
        </div>

        <footer class="dialog-foot">
          <button class="ibtn"><svg><use href="#i-help"/></svg></button>
          <button class="ibtn"><svg><use href="#i-edit"/></svg></button>
          <button class="ibtn"><svg><use href="#i-savew"/></svg></button>
          <button class="ibtn"><svg><use href="#i-tree"/></svg></button>
          <button class="ibtn"><svg><use href="#i-xls"/></svg></button>
          <div class="foot-main">
            <button class="btn">OK</button>
            <button class="btn btn-default">Storno</button>
          </div>
        </footer>
      </div>
    </section>
  </main>

  <footer class="statusbar">
    <span class="status-text">Hotovo</span>
    <div class="status-cells">
      <button class="cell w1">UCHOP</button>
      <button class="cell w2">RASTR</button>
      <button class="cell w3">KARTEZ</button>
      <button class="cell w4">OUCHOP</button>
      <button class="cell w2">VLINIE</button>
      <button class="cell w5">DXF</button>
    </div>
    <div class="status-panes"><span></span><span></span><span></span><span></span><span></span></div>
  </footer>
</div>
<script src="scene.js"></script>
</body>
</html>
```
FILE: styles.css
```css
* { box-sizing: border-box; }

body {
  margin: 0;
  font: 11px/13px "Liberation Sans", Arial, sans-serif;
  color: #000;
  background: #cfd3dc;
}

button, select, input { font: inherit; color: inherit; margin: 0; }
button { padding: 0; border: 0; background: none; }
h1, h2, h3, ul { margin: 0; padding: 0; font-size: inherit; font-weight: inherit; }
ul { list-style: none; }
.paints { position: absolute; }
.sprite { display: none; }

.app { display: flex; flex-direction: column; min-height: 100vh; }

/* window title */
.titlebar { display: flex; align-items: center; height: 23px; padding: 0 13px 1px 2px; background: #fff; }
.app-logo { width: 18px; height: 18px; }
.app-title { flex: 1; margin-left: 3px; font: 11px/16px "Noto Sans", "Open Sans", sans-serif; }
.win-buttons { display: flex; gap: 34px; padding-right: 6px; }
.win-buttons button, .win-buttons svg { display: block; width: 12px; height: 12px; }

/* menu */
.menubar { display: flex; align-items: center; height: 24px; padding: 0 2px 0 4px; color: #4a4e58; font: 11px/16px "Open Sans", sans-serif; }
.mdi-icon { width: 16px; height: 13px; margin-left: 4px; }
.menu { display: flex; flex: 1; gap: 15px; margin-left: 10px; }
.menu a { color: inherit; text-decoration: none; }
.mdi-buttons { width: 44px; height: 14px; }
.grip { width: 2px; height: 14px; background: repeating-linear-gradient(#a9aebb 0 2px, transparent 2px 4px); }

/* toolbars */
.toolbars { border-bottom: 1px solid #a0a4ae; }
.toolrow { display: flex; gap: 1px; height: 26px; }
.strip { display: flex; align-items: center; height: 26px; padding: 2px 2px 0 4px; border-bottom: 1px solid #b4b8c4; border-radius: 0 3px 3px 0; background: linear-gradient(#ebeff7, #dfe3ec 60%, #d3d7e1); }
.strip .grip { margin-right: 4px; }
.strip + .strip { border-radius: 3px; padding-left: 3px; }
.tb { display: flex; align-items: center; justify-content: center; width: 22px; height: 22px; flex: none; }
.tb svg { width: 18px; height: 18px; }
.tb.is-active { border: 1px solid #c89a50; background: linear-gradient(#fde0a8, #fba84a); }
.tb.split { width: 35px; padding-left: 2px; gap: 4px; }
.tb .dd { width: 8px; height: 8px; }
.sep { width: 8px; height: 15px; flex: none; background: linear-gradient(90deg, transparent 3px, #b4b8c4 3px 4px, #fff 4px 5px, transparent 5px); }
.covered { width: 353px; flex: none; }

.combo { position: relative; display: flex; width: 216px; height: 20px; margin: 0 2px; border: 1px solid #ffb55c; background: #fff; }
.combo-select { flex: 1; width: 0; padding: 0 3px; border: 0; background: #fff; appearance: none; font: 11px/18px "Open Sans", sans-serif; }
.combo-arrow { display: flex; align-items: center; justify-content: center; width: 14px; background: #ffa94d; }
.combo-arrow svg { width: 8px; height: 8px; }
.droplist { position: absolute; z-index: 5; top: 19px; left: -2px; display: flex; width: 343px; border: 1px solid #0078d7; background: #fff; box-shadow: 4px 4px 3px rgba(0, 0, 0, .35); }
.droplist ul { flex: 1; overflow: hidden; white-space: nowrap; }
.droplist li { height: 13px; padding-left: 2px; }
.droplist .is-selected { background: #0078d7; color: #fff; outline: 1px dotted #e8a050; outline-offset: -1px; }

.scroll { display: flex; flex-direction: column; width: 16px; background: #f0f0f0; }
.scroll svg { width: 16px; height: 17px; flex: none; }
.scroll .scroll-end { margin-top: auto; }
.thumb { margin: 0 1px 0 0; background: #cdcdcd; }

/* drawing area */
.workspace { position: relative; flex: 1; border: solid #666; border-width: 1px 1px 2px 2px; border-right-color: #e3e3e3; border-bottom-color: #e3e3e3; background: #fff; }
.scene { display: block; }
.edge { fill: none; stroke: #ff0a3c; stroke-width: 1.3; }
.axis-label { font: 10px "DejaVu Sans", sans-serif; }

/* dialog */
.dialog { position: absolute; top: 26px; right: 86px; width: 655px; border: 1px solid #707070; background: #f0f0f0; }
.dialog-title { display: flex; align-items: center; justify-content: space-between; height: 25px; padding: 0 10px 2px 3px; background: #fff; font: 11px/16px "Open Sans", sans-serif; }
.dialog-body { display: flex; flex-direction: column; gap: 10px; padding: 8px 8px 9px; }
.group-row { display: flex; justify-content: space-between; }
.group { min-height: 46px; border: solid #a9a9ea; border-width: 0 1px 1px 0; background: #f0f4fa; }
.group-wide { width: 397px; }
.group-narrow { width: 232px; }
.group h3 { height: 16px; padding: 0 2px; margin-right: -1px; color: #1f3f74; line-height: 14px; background: linear-gradient(215deg, #f0f0f0 6px, #dce5f4 7px); }
.group-fields { display: flex; gap: 5px; height: 29px; padding: 4px 3px; }
.select-wrap { position: relative; flex: 1; margin-right: -2px; }
.select-wrap select { width: 100%; height: 21px; padding: 0 6px; border: 1px solid #adadad; border-radius: 0; background: #e1e1e1; appearance: none; }
.select-wrap svg { position: absolute; top: 3px; right: 1px; width: 16px; height: 16px; pointer-events: none; }
.group-fields input { width: 100%; height: 20px; padding: 0 4px; border: 1px solid #7a7a7a; background: #f0f0f0; }
.ibtn { display: flex; align-items: center; justify-content: center; width: 25px; height: 21px; border: 1px solid #adadad; background: #e1e1e1; }
.ibtn:disabled { background: #ccc; border-color: #bfbfbf; }
.ibtn svg { width: 18px; height: 18px; }

.table-wrap { display: flex; justify-content: space-between; height: 115px; margin-bottom: 30px; padding-right: 1px; }
table { width: 619px; table-layout: fixed; border-collapse: collapse; background: #fff; }
.c-num { width: 39px; }
.c-name { width: 192px; }
.c-char { width: 252px; }
.c-self { width: 72px; }
.c-fac { width: 54px; }
th, td { height: 16px; padding: 0; border: 1px solid #a0a0a0; font-weight: 400; line-height: 13px; white-space: nowrap; }
td { padding-left: 4px; }
thead th { height: 17px; background: #f0f0f0; }
thead th:first-child { background: #e1e1e1; }
tbody th { border-color: #6e6e6e; background: #e1e1e1; box-shadow: inset 1px 1px #fff; }
.alt td { background: #ebebeb; }
.num { padding: 0 3px; text-align: right; }
.fill { background: #f0f0f0; }
.chk { padding: 0; text-align: center; line-height: 0; }
.chk input { width: 12px; height: 12px; appearance: none; border: 1px solid #000; border-width: 1px 2px 2px 1px; background: #fff; vertical-align: top; }
.chk input:checked { background: #fff url("data:image/svg+xml,%3Csvg xmlns='http://www.w3.org/2000/svg' viewBox='0 0 9 9'%3E%3Cpath d='M1.500 4l2 3 4-6' fill='none' stroke='%23000' stroke-width='1.800'/%3E%3C/svg%3E") center / 9px 9px no-repeat; }

.dialog-foot { display: flex; gap: 9px; padding-top: 11px; border-top: 1px solid #a0a0a0; }
.foot-main { display: flex; gap: 9px; margin-left: auto; padding-right: 1px; }
.btn { width: 73px; height: 21px; border: 1px solid #adadad; background: #e1e1e1; }
.btn-default { border: 2px solid #0078d7; }

/* status bar */
.statusbar { display: flex; align-items: center; justify-content: space-between; height: 22px; border-top: 1px solid #a4a7b0; background: linear-gradient(#e2e4ea, #c6cad4 40%, #abb0ba 45%, #bcc0c8); color: #222; }
.status-text { flex: 1; padding-left: 3px; }
.status-cells { display: flex; gap: 2px; }
.cell { height: 19px; padding-left: 1px; border: 1px solid; border-color: #000 #fff #fff #000; text-align: left; white-space: nowrap; }
.w1 { width: 46px; }
.w2 { width: 40px; }
.w3 { width: 50px; }
.w4 { width: 55px; }
.w5 { width: 28px; }
.status-panes { display: flex; width: 498px; }
.status-panes span { flex: 74; height: 18px; border-left: 1px solid #999ca4; }
.status-panes span:first-child { flex: 188; }
.status-panes span:nth-child(2) { flex: 88; }
```
FILE: scene.js
```js
const NS = 'http://www.w3.org/2000/svg';

function add(parent, name, attrs) {
  const el = document.createElementNS(NS, name);
  for (const key in attrs) el.setAttribute(key, attrs[key]);
  document.getElementById(parent).appendChild(el);
}

// Work-plane grid: 29 x 12 points from the right-hand corner
for (let i = 0; i <= 28; i++) {
  for (let j = 0; j <= 11; j++) {
    const x = Math.round(1394 - 45.9 * i - 33.9 * j);
    const y = Math.round(830 - 9.79 * i + 13.25 * j);
    if (x > 2) add('grid-dots', 'rect', { x, y, width: 1, height: 1 });
  }
}

// Smooth curve through the points (Catmull-Rom as Bezier segments)
function curve(p, start) {
  let d = start + p[0].join(' ');
  for (let i = 0; i < p.length - 1; i++) {
    const a = p[i - 1] || p[i], b = p[i], c = p[i + 1], e = p[i + 2] || c;
    d += `C${b[0] + (c[0] - a[0]) / 6} ${b[1] + (c[1] - a[1]) / 6} ` +
         `${c[0] - (e[0] - b[0]) / 6} ${c[1] - (e[1] - b[1]) / 6} ${c[0]} ${c[1]}`;
  }
  return d;
}

const rearTop = [[139, 648], [200, 622.5], [257, 603], [307, 590.5], [370, 578], [428, 571], [483, 568.7], [519, 571], [559, 576], [600, 583.5], [658, 599], [714, 620], [772, 647], [829, 678.5], [887, 715], [944, 753.5], [1002, 794], [1061, 839]];
const rearBottom = [[143, 664], [214, 638], [307, 610], [370, 596.5], [428, 589], [484, 585.5], [519, 587], [559, 591], [600, 598.5], [658, 614], [714, 635], [772, 663], [829, 696], [887, 734], [944, 775], [1002, 817], [1057, 859]];
const frontTop = [[53, 680], [143, 647], [200, 630], [257, 617], [307, 608.5], [357, 603.5], [400, 602], [457, 604.5], [514, 612.5], [560, 624], [600, 637.5], [650, 658.5], [700, 683], [749, 711], [796, 741], [850, 779], [915, 827], [977, 874]];
const frontBottom = [[58, 697], [143, 666], [228, 641], [285, 629], [343, 621.5], [400, 618.7], [457, 621.5], [514, 630.5], [560, 642], [600, 655], [630, 667.5], [677, 690], [713, 709.5], [745, 729.5], [796, 764], [859, 808], [915, 850], [972, 893]];

function arch(name, top, bottom) {
  const body = document.getElementById(name + '-arch');
  body.setAttribute('d', curve(top, 'M') + curve([...bottom].reverse(), 'L') + 'Z');
  // the box section shows its inner edges more and more towards the right
  const inner = (pts, k) => pts.map(([x, y]) => [x, y + k * 4 * Math.min(1, Math.max(0, (x - 450) / 300))]).filter(([x]) => x >= 450);
  document.getElementById(name + '-lines').setAttribute('d',
    curve(top, 'M') + curve(bottom, 'M') + curve(inner(top, 1), 'M') + curve(inner(bottom, -1), 'M'));
}
arch('rear', rearTop, rearBottom);
arch('front', frontTop, frontBottom);

// Cross beams and hangers repeat at equal bays
for (let k = 0; k < 7; k++) {
  const dx = 114.75 * k, dy = 24.4 * k;
  add('cross-beams', 'polygon', { fill: '#1a1ad8', points: `${254 + dx},${675 + dy} ${256 + dx},${681 + dy} ${201 + dx},${705 + dy} ${187 + dx},${702 + dy}` });
  add('cross-beams', 'path', { stroke: '#0f0f80', 'stroke-width': 2, d: `M${187 + dx} ${702 + dy}L${253 + dx} ${676 + dy}` });
}
const frontTops = [656, 628, 618, 630, 666, 728, 806];
const rearTops = [624, 595, 585, 597, 634, 695, 774];
function hanger(parent, x, y1, y2, w, c) {
  add(parent, 'path', { d: `M${x} ${y1}V${y2}`, stroke: '#dcdcff', 'stroke-width': w });
  add(parent, 'path', { d: `M${x} ${y1}V${y2}`, stroke: c, 'stroke-width': w - 2 });
}
for (let k = 0; k < 7; k++) {
  hanger('front-hangers', Math.round(170.5 + 114.7 * k), frontTops[k], Math.round(700 + 24.4 * k), 4, '#c4c4fa');
  hanger('rear-hangers', Math.round(255 + 114.8 * k), rearTops[k], Math.round(667 + 24.3 * k), 4, '#c8c8fa');
}
```
